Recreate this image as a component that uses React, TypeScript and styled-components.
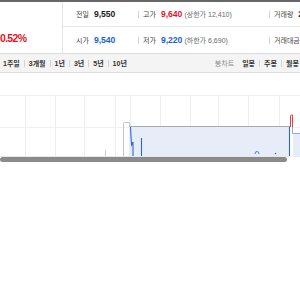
import React from "react";
import styled, { createGlobalStyle } from "styled-components";

const GlobalStyle = createGlobalStyle`
  html, body { margin: 0; padding: 0; background: #fff; }
  body { font-family: "Liberation Sans", "Noto Sans CJK KR", sans-serif; }
`;

const Root = styled.div`
  width: 300px;
  height: 300px;
  overflow: hidden;
  background: #fff;
  white-space: nowrap;
`;

const Summary = styled.div`
  display: grid;
  grid-template-columns: 63px 1fr;
  height: 54px;
  box-sizing: border-box;
  border-top: 2px solid #676767;
  border-bottom: 1px solid #dcdcdc;
`;

const RateCell = styled.div`
  border-right: 1px solid #e4e4e4;
  padding-top: 29px;
  line-height: 14px;
  font-size: 10.5px;
  font-weight: 700;
  letter-spacing: -0.7px;
  color: #e3141f;
`;

const Stats = styled.div`
  display: grid;
  grid-template-rows: 25px 26px;
`;

const StatRow = styled.div`
  display: flex;
  align-items: center;
  padding-left: 13px;
  box-sizing: border-box;
  border-bottom: ${(p: { $line?: boolean }) => (p.$line ? "1px solid #e8e8e8" : "none")};
`;

const StatItem = styled.div<{ $w?: number; $sep?: boolean }>`
  display: flex;
  align-items: center;
  flex: none;
  width: ${(p) => (p.$w ? `${p.$w}px` : "auto")};
  &::before {
    content: "";
    display: ${(p) => (p.$sep ? "block" : "none")};
    width: 1px;
    height: 7px;
    background: #d2d2d2;
    margin-right: 4px;
  }
`;

const Label = styled.span`
  font-size: 7px;
  color: #444;
  margin-right: 5px;
`;

const Value = styled.span<{ $tone?: "up" | "down" }>`
  font-size: 8.6px;
  font-weight: 700;
  color: ${(p) => (p.$tone === "up" ? "#e3141f" : p.$tone === "down" ? "#1a5fd6" : "#222")};
`;

const Sub = styled.span`
  font-size: 7px;
  color: #6a6a6a;
  margin-left: 2px;
`;

const Tabs = styled.div`
  display: flex;
  align-items: center;
  height: 19px;
  box-sizing: border-box;
  padding-left: 3px;
  background: #f4f4f4;
  border-bottom: 1px solid #dddddd;
`;

const TabGroup = styled.div<{ $offset?: number }>`
  display: flex;
  align-items: center;
  margin-left: ${(p) => p.$offset ?? 0}px;
`;

const Tab = styled.span`
  display: flex;
  align-items: center;
  font-size: 7px;
  font-weight: 700;
  color: #333;
  & + &::before {
    content: "";
    width: 1px;
    height: 7px;
    background: #d4d4d4;
    margin: 0 4px;
  }
`;

const TabCaption = styled.span`
  font-size: 7px;
  color: #8a8a8a;
  margin-right: 8px;
`;

const Chart = styled.svg`
  display: block;
  width: 300px;
  height: 84px;
`;

const Thumb = styled.div`
  width: 287px;
  height: 5px;
  border-radius: 3px;
  background: #8b8b8b;
`;

const gridX = [25.5, 55.5, 84.5, 115.5, 130.5, 160.5, 190.5, 218.5, 248.5, 279.5];

export default function App() {
  return (
    <Root>
      <GlobalStyle />
      <Summary>
        <RateCell>0.52%</RateCell>
        <Stats>
          <StatRow $line>
            <StatItem $w={62}>
              <Label>전일</Label>
              <Value>9,550</Value>
            </StatItem>
            <StatItem $w={131} $sep>
              <Label>고가</Label>
              <Value $tone="up">9,640</Value>
              <Sub>(상한가 12,410)</Sub>
            </StatItem>
            <StatItem $sep>
              <Label>거래량</Label>
              <Value>2,145,338</Value>
            </StatItem>
          </StatRow>
          <StatRow>
            <StatItem $w={62}>
              <Label>시가</Label>
              <Value $tone="down">9,540</Value>
            </StatItem>
            <StatItem $w={131} $sep>
              <Label>저가</Label>
              <Value $tone="down">9,220</Value>
              <Sub>(하한가 6,690)</Sub>
            </StatItem>
            <StatItem $sep>
              <Label>거래대금</Label>
              <Value>20,171</Value>
            </StatItem>
          </StatRow>
        </Stats>
      </Summary>
      <Tabs>
        <TabGroup>
          <Tab>1주일</Tab>
          <Tab>3개월</Tab>
          <Tab>1년</Tab>
          <Tab>3년</Tab>
          <Tab>5년</Tab>
          <Tab>10년</Tab>
        </TabGroup>
        <TabGroup $offset={88}>
          <TabCaption>봉차트</TabCaption>
          <Tab>일봉</Tab>
          <Tab>주봉</Tab>
          <Tab>월봉</Tab>
        </TabGroup>
      </Tabs>
      <Chart viewBox="0 0 300 84">
        <line x1="0" y1="22.5" x2="300" y2="22.5" stroke="#f0f0f0" />
        <line x1="0" y1="54.5" x2="300" y2="54.5" stroke="#f0f0f0" />
        {gridX.map((x) => (
          <line key={x} x1={x} y1="22" x2={x} y2="84" stroke="#eeeeee" />
        ))}
        <rect x="129" y="53.5" width="161" height="30.5" fill="#e6edf9" />
        <rect x="293" y="60" width="7" height="24" fill="#e6edf9" />
        <path d="M129 53.5 H290" stroke="#a9a9a9" fill="none" />
        <path d="M123.5 84 V50.5 Q123.5 49.5 124.5 49.5 H129.5 V53.5" stroke="#c4c4c4" fill="none" />
        <path d="M105.5 77 V83" stroke="#cfcfcf" fill="none" />
        <path d="M130.5 54 L131.5 72 L133 69 V84" stroke="#2e66d0" strokeWidth="1.1" fill="none" />
        <path d="M141.5 65 V84" stroke="#2e66d0" strokeWidth="1.1" fill="none" />
        <path d="M255 81 Q255 78.5 257 78.5 Q259 78.5 259 81" stroke="#4a7fdc" fill="none" />
        <circle cx="275.5" cy="80.5" r="0.8" fill="#2e66d0" />
        <path d="M289.5 54 V84" stroke="#2e66d0" strokeWidth="1.1" fill="none" />
        <path d="M290.5 54 V43 Q290.5 42 291.5 42 H292.5 V54" stroke="#e5414a" fill="none" />
        <path d="M292.5 54 V60.5 H300" stroke="#8fa9d8" fill="none" />
        <line x1="0" y1="83.5" x2="290" y2="83.5" stroke="#e8e8e8" />
      </Chart>
      <Thumb />
    </Root>
  );
}
